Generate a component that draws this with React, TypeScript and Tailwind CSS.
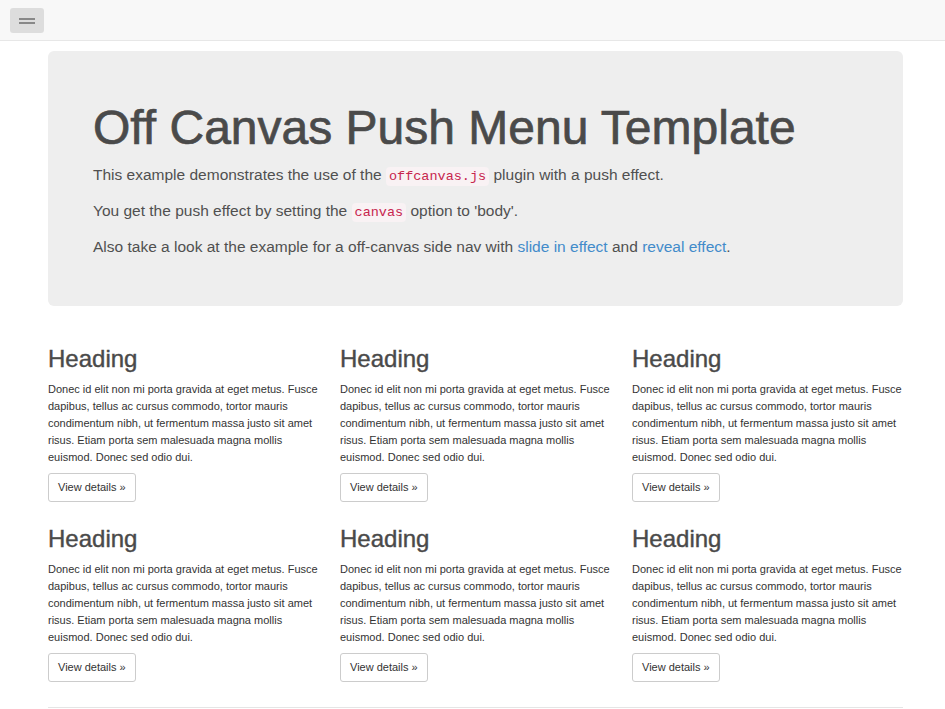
const body =
  "Donec id elit non mi porta gravida at eget metus. Fusce dapibus, tellus ac cursus commodo, tortor mauris condimentum nibh, ut fermentum massa justo sit amet risus. Etiam porta sem malesuada magna mollis euismod. Donec sed odio dui."

const Code = ({ children }: { children: string }) => (
  <code className="font-['Liberation_Mono','DejaVu_Sans_Mono',monospace] text-[13.5px] leading-none text-[#c7254e] bg-[#f9f2f4] rounded px-[3px] py-[2px]">
    {children}
  </code>
)

const Item = () => (
  <div>
    <h2 className="mt-[3px] text-[24px] leading-[26px] text-[#4a4a4a] [-webkit-text-stroke:0.4px_#4a4a4a]">Heading</h2>
    <p className="mt-[9px] text-[11px] leading-[17px] text-[#333]">{body}</p>
    <button className="mt-[7px] h-[29px] px-[9px] border border-[#ccc] rounded-[3px] bg-white text-[11px] text-[#333]">
      View details »
    </button>
  </div>
)

export default function App() {
  return (
    <div className="min-h-[709px] bg-white font-['Liberation_Sans',Arial,sans-serif]">
      <div className="h-[41px] bg-[#f8f8f8] border-b border-[#e7e7e7] pt-[8px] pl-[10px]">
        <button className="w-[34px] h-[25px] bg-[#ddd] rounded-[3px] flex flex-col items-center justify-center gap-[2px]">
          <span className="block w-[16px] h-[2px] bg-[#888]" />
          <span className="block w-[16px] h-[2px] bg-[#888]" />
        </button>
      </div>
      <div className="mx-[48px] w-[855px]">
        <div className="mt-[10px] h-[255px] rounded-md bg-[#eee] pl-[45px] pt-[51px]">
          <h1 className="text-[48px] leading-[52px] whitespace-nowrap text-[#4a4a4a] [-webkit-text-stroke:0.7px_#4a4a4a]">
            Off Canvas Push Menu Template
          </h1>
          <div className="mt-[11px] text-[15.5px] leading-[20px] text-[#505050] flex flex-col gap-[16px]">
            <p>
              This example demonstrates the use of the <Code>offcanvas.js</Code> plugin with a push effect.
            </p>
            <p>
              You get the push effect by setting the <Code>canvas</Code> option to 'body'.
            </p>
            <p>
              Also take a look at the example for a off-canvas side nav with{" "}
              <a className="text-[#428bca]">slide in effect</a> and <a className="text-[#428bca]">reveal effect</a>.
            </p>
          </div>
        </div>
        <div className="mt-[37px] grid grid-cols-[272px_272px_271px] gap-x-[20px] gap-y-[21px]">
          <Item />
          <Item />
          <Item />
          <Item />
          <Item />
          <Item />
        </div>
        <hr className="mt-[25px] border-t border-[#e5e5e5]" />
      </div>
    </div>
  )
}
